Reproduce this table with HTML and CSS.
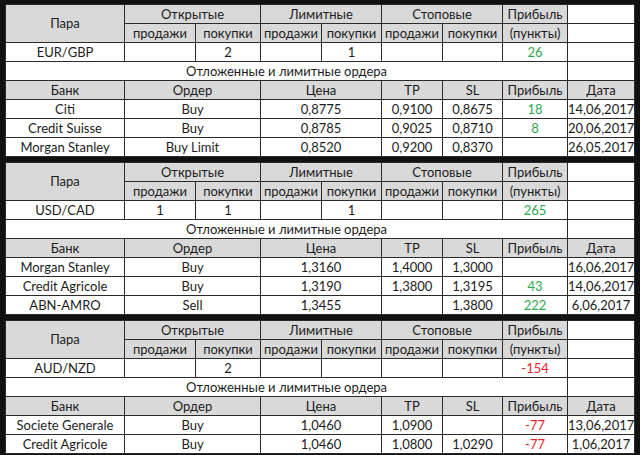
FILE: index.html
```html
<!DOCTYPE html>
<html lang="ru">
<head>
    <meta charset="UTF-8">
    <title>Позиции банков</title>
    <link rel="stylesheet" href="styles.css">
</head>
<body>
    <div class="sheet">
        <!-- EUR/GBP -->
        <table class="block">
            <colgroup>
                <col class="c1"><col class="c2"><col class="c3"><col class="c4"><col class="c5">
                <col class="c6"><col class="c7"><col class="c8"><col class="c9">
            </colgroup>
            <tr>
                <td class="hd" rowspan="2">Пара</td>
                <td class="hd top" colspan="2">Открытые</td>
                <td class="hd top" colspan="2">Лимитные</td>
                <td class="hd top" colspan="2">Стоповые</td>
                <td class="hd top">Прибыль</td>
                <td class="g"></td>
            </tr>
            <tr>
                <td class="hd">продажи</td><td class="hd">покупки</td>
                <td class="hd">продажи</td><td class="hd">покупки</td>
                <td class="hd">продажи</td><td class="hd">покупки</td>
                <td class="hd">(пункты)</td>
                <td class="g"></td>
            </tr>
            <tr>
                <td>EUR/GBP</td><td></td><td>2</td><td></td><td>1</td><td></td><td></td>
                <td class="plus">26</td>
                <td class="g"></td>
            </tr>
            <tr>
                <td class="sub" colspan="8">Отложенные и лимитные ордера</td>
                <td class="g end"></td>
            </tr>
            <tr>
                <td class="hd">Банк</td><td class="hd" colspan="2">Ордер</td><td class="hd" colspan="2">Цена</td>
                <td class="hd">TP</td><td class="hd">SL</td><td class="hd">Прибыль</td><td class="hd">Дата</td>
            </tr>
            <tr>
                <td>Citi</td><td colspan="2">Buy</td><td colspan="2">0,8775</td>
                <td>0,9100</td><td>0,8675</td><td class="plus">18</td><td>14,06,2017</td>
            </tr>
            <tr>
                <td>Credit Suisse</td><td colspan="2">Buy</td><td colspan="2">0,8785</td>
                <td>0,9025</td><td>0,8710</td><td class="plus">8</td><td>20,06,2017</td>
            </tr>
            <tr>
                <td>Morgan Stanley</td><td colspan="2">Buy Limit</td><td colspan="2">0,8520</td>
                <td>0,9200</td><td>0,8370</td><td></td><td>26,05,2017</td>
            </tr>
        </table>

        <!-- USD/CAD -->
        <table class="block">
            <colgroup>
                <col class="c1"><col class="c2"><col class="c3"><col class="c4"><col class="c5">
                <col class="c6"><col class="c7"><col class="c8"><col class="c9">
            </colgroup>
            <tr>
                <td class="hd" rowspan="2">Пара</td>
                <td class="hd top" colspan="2">Открытые</td>
                <td class="hd top" colspan="2">Лимитные</td>
                <td class="hd top" colspan="2">Стоповые</td>
                <td class="hd top">Прибыль</td>
                <td class="g"></td>
            </tr>
            <tr>
                <td class="hd">продажи</td><td class="hd">покупки</td>
                <td class="hd">продажи</td><td class="hd">покупки</td>
                <td class="hd">продажи</td><td class="hd">покупки</td>
                <td class="hd">(пункты)</td>
                <td class="g"></td>
            </tr>
            <tr>
                <td>USD/CAD</td><td>1</td><td>1</td><td></td><td>1</td><td></td><td></td>
                <td class="plus">265</td>
                <td class="g"></td>
            </tr>
            <tr>
                <td class="sub" colspan="8">Отложенные и лимитные ордера</td>
                <td class="g end"></td>
            </tr>
            <tr>
                <td class="hd">Банк</td><td class="hd" colspan="2">Ордер</td><td class="hd" colspan="2">Цена</td>
                <td class="hd">TP</td><td class="hd">SL</td><td class="hd">Прибыль</td><td class="hd">Дата</td>
            </tr>
            <tr>
                <td>Morgan Stanley</td><td colspan="2">Buy</td><td colspan="2">1,3160</td>
                <td>1,4000</td><td>1,3000</td><td></td><td>16,06,2017</td>
            </tr>
            <tr>
                <td>Credit Agricole</td><td colspan="2">Buy</td><td colspan="2">1,3190</td>
                <td>1,3800</td><td>1,3195</td><td class="plus">43</td><td>14,06,2017</td>
            </tr>
            <tr>
                <td>ABN-AMRO</td><td colspan="2">Sell</td><td colspan="2">1,3455</td>
                <td></td><td>1,3800</td><td class="plus">222</td><td>6,06,2017</td>
            </tr>
        </table>

        <!-- AUD/NZD -->
        <table class="block">
            <colgroup>
                <col class="c1"><col class="c2"><col class="c3"><col class="c4"><col class="c5">
                <col class="c6"><col class="c7"><col class="c8"><col class="c9">
            </colgroup>
            <tr>
                <td class="hd" rowspan="2">Пара</td>
                <td class="hd top" colspan="2">Открытые</td>
                <td class="hd top" colspan="2">Лимитные</td>
                <td class="hd top" colspan="2">Стоповые</td>
                <td class="hd top">Прибыль</td>
                <td class="g"></td>
            </tr>
            <tr>
                <td class="hd">продажи</td><td class="hd">покупки</td>
                <td class="hd">продажи</td><td class="hd">покупки</td>
                <td class="hd">продажи</td><td class="hd">покупки</td>
                <td class="hd">(пункты)</td>
                <td class="g"></td>
            </tr>
            <tr>
                <td>AUD/NZD</td><td></td><td>2</td><td></td><td></td><td></td><td></td>
                <td class="minus">-154</td>
                <td class="g"></td>
            </tr>
            <tr>
                <td class="sub" colspan="8">Отложенные и лимитные ордера</td>
                <td class="g end"></td>
            </tr>
            <tr>
                <td class="hd">Банк</td><td class="hd" colspan="2">Ордер</td><td class="hd" colspan="2">Цена</td>
                <td class="hd">TP</td><td class="hd">SL</td><td class="hd">Прибыль</td><td class="hd">Дата</td>
            </tr>
            <tr>
                <td>Societe Generale</td><td colspan="2">Buy</td><td colspan="2">1,0460</td>
                <td>1,0900</td><td></td><td class="minus">-77</td><td>13,06,2017</td>
            </tr>
            <tr>
                <td>Credit Agricole</td><td colspan="2">Buy</td><td colspan="2">1,0460</td>
                <td>1,0800</td><td>1,0290</td><td class="minus">-77</td><td>1,06,2017</td>
            </tr>
        </table>
    </div>
</body>
</html>
```

FILE: styles.css
```css
html, body {
    margin: 0;
    padding: 0;
    background: #111;
}
.sheet {
    display: flex;
    flex-direction: column;
    gap: 5px;
    padding: 4px 6px 4px 5px;
    width: 629px;
}
.block {
    width: 629px;
    table-layout: fixed;
    border-collapse: collapse;
    background: #fff;
    font-family: Lato, "Liberation Sans", sans-serif;
    font-size: 13px;
    color: #1c1c1c;
}
.c1 { width: 119px; }
.c2 { width: 71px; }
.c3 { width: 65px; }
.c4 { width: 61px; }
.c5 { width: 60px; }
.c6 { width: 61px; }
.c7 { width: 60px; }
.c8 { width: 65px; }
.c9 { width: 67px; }
.block tr {
    height: 19px;
}
.block td {
    padding: 0;
    height: 18px;
    line-height: 17px;
    text-align: center;
    white-space: nowrap;
    overflow: hidden;
    border: 1px solid #2a2a2a;
}
.hd {
    background: #d9d9d9;
}
.top {
    border-bottom-color: #9e9e9e;
}
.g {
    border-color: #d6d6d6;
}
.g.end {
    border-bottom-color: #2a2a2a;
}
.sub {
    border-right-color: #d6d6d6;
}
.plus {
    color: #2fa84f;
}
.minus {
    color: #e8232b;
}
```
